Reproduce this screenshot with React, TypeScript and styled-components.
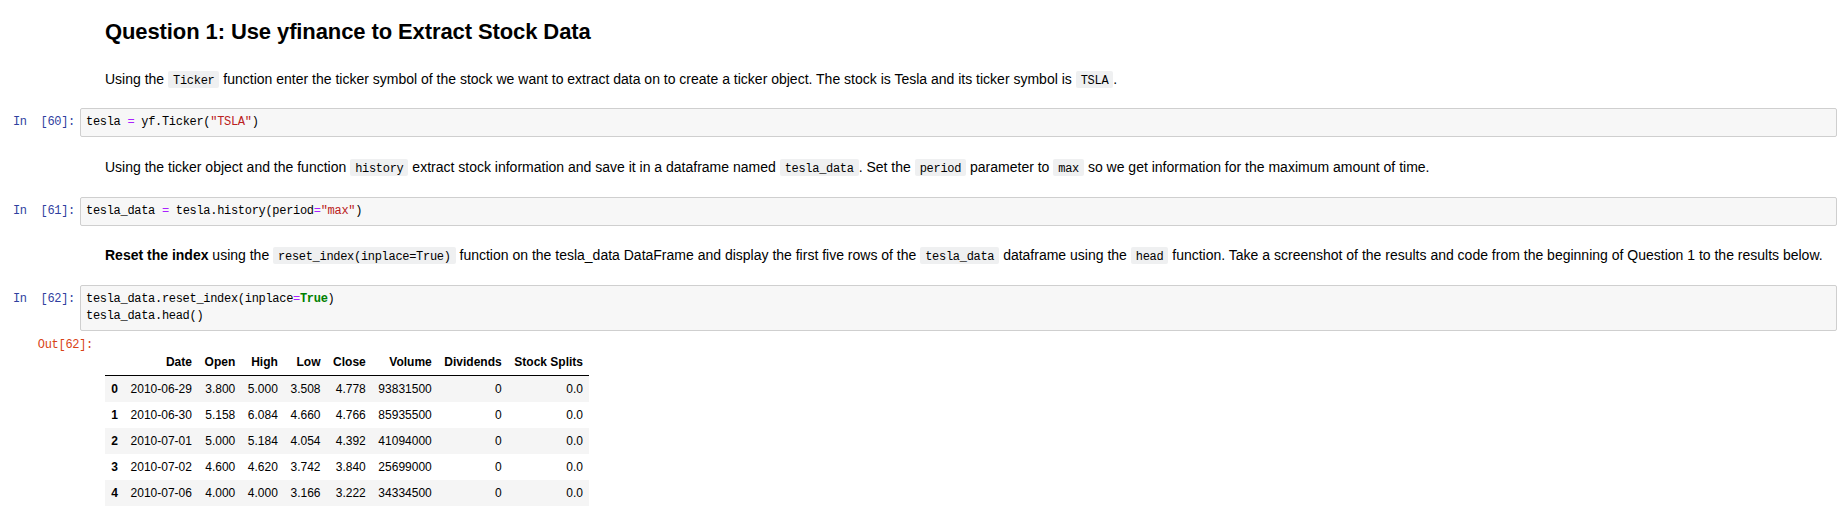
import React from "react";
import styled, { createGlobalStyle } from "styled-components";

const GlobalStyle = createGlobalStyle`
  html, body {
    margin: 0;
    padding: 0;
    background: #ffffff;
  }
  body {
    font-family: "Liberation Sans", Arial, Helvetica, sans-serif;
    color: #000000;
  }
`;

const MONO = `"Liberation Mono", "DejaVu Sans Mono", monospace`;

const Notebook = styled.div`
  display: flex;
  flex-direction: column;
  padding: 19px 11px 0 0;
`;

const Cell = styled.div<{ $mt?: number }>`
  display: flex;
  align-items: flex-start;
  margin-top: ${(p) => (p.$mt ?? 20)}px;
`;

const Prompt = styled.div<{ $kind: "in" | "out" | "none"; $width?: number }>`
  flex: none;
  box-sizing: border-box;
  width: ${(p) => p.$width ?? 80}px;
  padding-top: ${(p) => (p.$kind === "in" ? 6 : 0)}px;
  padding-right: ${(p) => (p.$kind === "out" ? 12 : 5)}px;
  text-align: right;
  white-space: pre;
  font-family: ${MONO};
  font-size: 12px;
  letter-spacing: -0.3px;
  line-height: 17px;
  color: ${(p) => (p.$kind === "out" ? "#D84315" : "#303F9F")};
`;

const MdContent = styled.div`
  flex: 1;
  padding-left: 25px;
  font-size: 14px;
  line-height: 20px;
`;

const Heading = styled.h2`
  margin: 0;
  font-size: 22px;
  line-height: 26px;
  font-weight: bold;
  letter-spacing: -0.1px;
`;

const Para = styled.p`
  margin: 0;
`;

const InlineCode = styled.code`
  font-family: ${MONO};
  font-size: 12px;
  line-height: 14px;
  letter-spacing: -0.3px;
  background: #eff0f1;
  padding: 3px 5px 0 5px;
  border-radius: 2px;
`;

const InputArea = styled.div`
  flex: 1;
  background: #f7f7f7;
  border: 1px solid #cfcfcf;
  border-radius: 2px;
  padding: 5px;
`;

const CodeLine = styled.div`
  font-family: ${MONO};
  font-size: 12px;
  letter-spacing: -0.3px;
  line-height: 17px;
  white-space: pre;
  color: #000;
`;

const Op = styled.span`
  color: #aa22ff;
`;

const Str = styled.span`
  color: #ba2121;
`;

const Kw = styled.span`
  color: #008000;
  font-weight: bold;
`;

const OutputArea = styled.div`
  flex: 1;
  padding-top: 12px;
`;

const Table = styled.table`
  border-collapse: collapse;
  border-spacing: 0;
  border: none;
  font-family: "Liberation Sans", Arial, sans-serif;
  font-size: 12px;
  color: #000;
`;

const HeadCell = styled.th`
  text-align: right;
  font-weight: bold;
  padding: 6px 6.3px;
  line-height: 14px;
  border-bottom: 1px solid #000;
  white-space: nowrap;
`;

const BodyRow = styled.tr<{ $striped: boolean }>`
  background: ${(p) => (p.$striped ? "#f5f5f5" : "#ffffff")};
`;

const IndexCell = styled.th`
  text-align: right;
  font-weight: bold;
  padding: 6px 6.3px;
  line-height: 14px;
`;

const DataCell = styled.td`
  text-align: right;
  padding: 6px 6.3px;
  line-height: 14px;
  white-space: nowrap;
`;

const columns = ["", "Date", "Open", "High", "Low", "Close", "Volume", "Dividends", "Stock Splits"];

const rows: string[][] = [
  ["0", "2010-06-29", "3.800", "5.000", "3.508", "4.778", "93831500", "0", "0.0"],
  ["1", "2010-06-30", "5.158", "6.084", "4.660", "4.766", "85935500", "0", "0.0"],
  ["2", "2010-07-01", "5.000", "5.184", "4.054", "4.392", "41094000", "0", "0.0"],
  ["3", "2010-07-02", "4.600", "4.620", "3.742", "3.840", "25699000", "0", "0.0"],
  ["4", "2010-07-06", "4.000", "4.000", "3.166", "3.222", "34334500", "0", "0.0"],
];

export default function App() {
  return (
    <>
      <GlobalStyle />
      <Notebook>
        <Cell $mt={0}>
          <Prompt $kind="none" />
          <MdContent>
            <Heading>Question 1: Use yfinance to Extract Stock Data</Heading>
          </MdContent>
        </Cell>

        <Cell $mt={24}>
          <Prompt $kind="none" />
          <MdContent>
            <Para>
              Using the <InlineCode>Ticker</InlineCode> function enter the ticker symbol of the stock we want to
              extract data on to create a ticker object. The stock is Tesla and its ticker symbol is{" "}
              <InlineCode>TSLA</InlineCode>.
            </Para>
          </MdContent>
        </Cell>

        <Cell $mt={19}>
          <Prompt $kind="in">{"In  [60]:"}</Prompt>
          <InputArea>
            <CodeLine>
              tesla <Op>=</Op> yf.Ticker(<Str>"TSLA"</Str>)
            </CodeLine>
          </InputArea>
        </Cell>

        <Cell $mt={20}>
          <Prompt $kind="none" />
          <MdContent>
            <Para>
              Using the ticker object and the function <InlineCode>history</InlineCode> extract stock information
              and save it in a dataframe named <InlineCode>tesla_data</InlineCode>. Set the{" "}
              <InlineCode>period</InlineCode> parameter to <InlineCode>max</InlineCode> so we get information for
              the maximum amount of time.
            </Para>
          </MdContent>
        </Cell>

        <Cell $mt={20}>
          <Prompt $kind="in">{"In  [61]:"}</Prompt>
          <InputArea>
            <CodeLine>
              tesla_data <Op>=</Op> tesla.history(period<Op>=</Op>
              <Str>"max"</Str>)
            </CodeLine>
          </InputArea>
        </Cell>

        <Cell $mt={19}>
          <Prompt $kind="none" />
          <MdContent>
            <Para>
              <b>Reset the index</b> using the <InlineCode>reset_index(inplace=True)</InlineCode> function on the
              tesla_data DataFrame and display the first five rows of the <InlineCode>tesla_data</InlineCode>{" "}
              dataframe using the <InlineCode>head</InlineCode> function. Take a screenshot of the results and code
              from the beginning of Question 1 to the results below.
            </Para>
          </MdContent>
        </Cell>

        <Cell $mt={20}>
          <Prompt $kind="in">{"In  [62]:"}</Prompt>
          <InputArea>
            <CodeLine>
              tesla_data.reset_index(inplace<Op>=</Op>
              <Kw>True</Kw>)
            </CodeLine>
            <CodeLine>tesla_data.head()</CodeLine>
          </InputArea>
        </Cell>

        <Cell $mt={6}>
          <Prompt $kind="out" $width={105}>
            {"Out[62]:"}
          </Prompt>
          <OutputArea>
            <Table>
              <thead>
                <tr>
                  {columns.map((c, i) => (
                    <HeadCell key={i}>{c}</HeadCell>
                  ))}
                </tr>
              </thead>
              <tbody>
                {rows.map((r, i) => (
                  <BodyRow key={i} $striped={i % 2 === 0}>
                    <IndexCell>{r[0]}</IndexCell>
                    {r.slice(1).map((v, j) => (
                      <DataCell key={j}>{v}</DataCell>
                    ))}
                  </BodyRow>
                ))}
              </tbody>
            </Table>
          </OutputArea>
        </Cell>
      </Notebook>
    </>
  );
}
